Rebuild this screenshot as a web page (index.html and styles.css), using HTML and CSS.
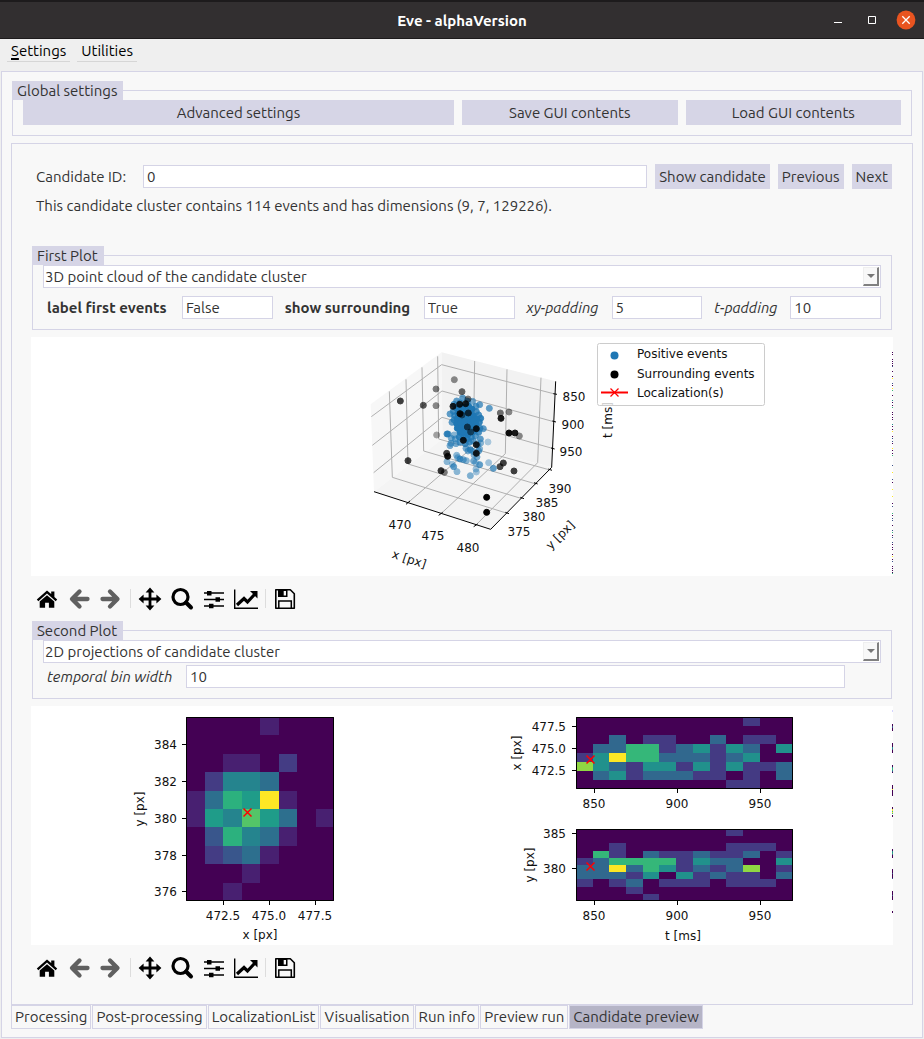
FILE: index.html
```html
<!DOCTYPE html>
<html lang="en">
<head>
<meta charset="utf-8">
<meta name="viewport" content="width=device-width, initial-scale=1">
<title>Eve - alphaVersion</title>
<link rel="stylesheet" href="styles.css">
</head>
<body>
<svg class="sprite" aria-hidden="true">
  <symbol id="i-home" viewBox="0 0 24 24"><path d="M12 3.4 1.8 12.6l1.5 1.7L12 6.6l8.7 7.7 1.5-1.7-2.8-2.6V4.5h-3.2v2.6z"/><path d="M12 8.2 4.7 14.6V20.700h5.4v-5h3.800v5h5.400v-6.100z"/></symbol>
  <symbol id="i-back" viewBox="0 0 24 24"><path d="M12.500 4.500 5 12l7.500 7.500M6 12h14.500" fill="none" stroke="currentColor" stroke-width="4.300" stroke-linecap="round" stroke-linejoin="round"/></symbol>
  <symbol id="i-forward" viewBox="0 0 24 24"><path d="M11 4.500l7.500 7.500-7.500 7.500M17.500 12H3.500" fill="none" stroke="currentColor" stroke-width="4.300" stroke-linecap="round" stroke-linejoin="round"/></symbol>
  <symbol id="i-move" viewBox="0 0 24 24"><path d="M12 .6 16.400 5.400H13.400V10.500H18.400V7.500L23.400 12 18.400 16.500V13.500H13.400V18.600H16.400L12 23.400 7.600 18.600H10.600V13.500H5.600V16.500L.6 12 5.600 7.500V10.500H10.600V5.400H7.600z"/></symbol>
  <symbol id="i-zoom" viewBox="0 0 24 24"><circle cx="10.500" cy="10" r="7.500" fill="none" stroke="currentColor" stroke-width="3.200"/><path d="M16 15.500l5 5" stroke="currentColor" stroke-width="4" stroke-linecap="round"/></symbol>
  <symbol id="i-sliders" viewBox="0 0 24 24"><path d="M2 6h20M2 12.500h20M2 19h20" stroke="currentColor" stroke-width="1.500"/><path d="M5 4h4.500v4.500H5zM13.500 10.300h4.500v4.500h-4.500zM7 16.700h4.500v4.500H7z"/></symbol>
  <symbol id="i-chart" viewBox="0 0 24 24"><path d="M.7 2.500v18.800H24" fill="none" stroke="currentColor" stroke-width="1.400"/><path d="M3 18l7-6.500 3.500 3.500 7-7.500" fill="none" stroke="currentColor" stroke-width="3.200"/><path d="M16 4h7.500v7.500z"/></symbol>
  <symbol id="i-save" viewBox="0 0 24 24"><path d="M2.800 2.800h14.500l4 4v14.500H2.800z" fill="none" stroke="currentColor" stroke-width="1.600" stroke-linejoin="round"/><path d="M5 2.500h9.500v7.500H5zM10.700 4v4.500h2.300V4z" fill-rule="evenodd"/><path d="M5.800 21v-7h12.500v7" fill="none" stroke="currentColor" stroke-width="1.500"/></symbol>
</svg>

<header class="titlebar">
  <h1 class="titlebar-text">Eve - alphaVersion</h1>
  <div class="window-buttons">
    <button type="button" class="win" aria-label="Minimize"><svg viewBox="0 0 20 20"><path d="M6 12.500h8" stroke="#fff"/></svg></button>
    <button type="button" class="win" aria-label="Maximize"><svg viewBox="0 0 20 20"><path d="M6.500 6.500h7v7h-7z" fill="none" stroke="#fff"/></svg></button>
    <button type="button" class="win" aria-label="Close"><svg viewBox="0 0 20 20"><circle cx="10" cy="10" r="9.400" fill="#e95420"/><path d="M6.300 6.300l7.400 7.400M13.700 6.300l-7.400 7.400" stroke="#fff" stroke-width="1.300"/></svg></button>
  </div>
</header>

<nav class="menubar">
  <button type="button" class="menu"><u>S</u>ettings</button>
  <button type="button" class="menu">Utilities</button>
</nav>

<main class="shell">
  <fieldset class="group">
    <legend>Global settings</legend>
    <div class="global-buttons">
      <button type="button" class="btn">Advanced settings</button>
      <button type="button" class="btn">Save GUI contents</button>
      <button type="button" class="btn">Load GUI contents</button>
    </div>
  </fieldset>

  <section class="page" role="tabpanel" aria-label="Candidate preview">
    <div class="candidate">
      <label for="cid">Candidate ID:</label>
      <input id="cid" class="field" type="text" value="0">
      <button type="button" class="btn">Show candidate</button>
      <button type="button" class="btn">Previous</button>
      <button type="button" class="btn">Next</button>
    </div>
    <p class="info">This candidate cluster contains 114 events and has dimensions (9, 7, 129226).</p>

    <fieldset class="group">
      <legend>First Plot</legend>
      <div class="combo">
        <select aria-label="First plot type"><option>3D point cloud of the candidate cluster</option></select>
        <span class="combo-arrow"></span>
      </div>
      <div class="params params-four">
        <label class="strong" for="lfe">label first events</label><input id="lfe" class="field" type="text" value="False">
        <label class="strong" for="ssr">show surrounding</label><input id="ssr" class="field" type="text" value="True">
        <label class="soft" for="xyp">xy-padding</label><input id="xyp" class="field" type="text" value="5">
        <label class="soft" for="tp">t-padding</label><input id="tp" class="field" type="text" value="10">
      </div>
    </fieldset>

    <svg class="plot" viewBox="0 0 862 239" role="img" aria-label="3D point cloud">
      <g transform="translate(319 -2) scale(.33333)" fill="none" stroke-width="3">
        <path d="M62 208 275 52 277 312 72 470z" fill="#f7f7f7"/>
        <path d="M275 52 617 139 605 397 277 312z" fill="#f2f2f2"/>
        <path d="M72 470 277 312 605 397 422 583z" fill="#f4f4f4"/>
        <g stroke="#b0b0b0">
          <path d="M64 245 275 89 614 177M67 331 276 168 611 260M71 413 276 247 607 340"/>
          <path d="M374 78 370 335 174 503M471 103 466 356 272 537M573 128 563 383 376 572"/>
          <path d="M118 169 127 427 472 535M168 133 174 387 516 491M216 97 221 348 558 447M263 64 266 312 600 405"/>
        </g>
        <path stroke="#000" d="M72 470 422 583 605 397 617 139M168 508l12-10M266 541l12-9M371 575l12-8M466 532l11 4M511 487l11 4M552 443l11 4M595 402l11 4M610 176l11 2M607 258l11 3M603 339l11 3"/>
        <g id="cloud"></g>
      </g>
      <g class="ticks mid">
        <text x="369" y="192">470</text><text x="402" y="203">475</text><text x="437" y="215">480</text>
        <text x="488" y="199">375</text><text x="503" y="184">380</text><text x="516" y="170">385</text><text x="529" y="156">390</text>
        <text x="543" y="64">850</text><text x="542" y="92">900</text><text x="540" y="119">950</text>
        <text transform="translate(377 226) rotate(18)">x [px]</text>
        <text transform="translate(532 201) rotate(-45)">y [px]</text>
        <text transform="translate(581 83) rotate(-90)">t [ms]</text>
      </g>
      <rect x="566.500" y="6.500" width="167" height="62" rx="2" fill="#fff" fill-opacity=".8" stroke="#ccc"/>
      <circle cx="583.500" cy="18.500" r="4" fill="#1f77b4"/>
      <circle cx="583.500" cy="37.500" r="4" fill="#000"/>
      <path d="M570 55.500h27" stroke="#f00" stroke-width="2"/>
      <path d="M579.500 51.500l8 8m0-8l-8 8" stroke="#f00" stroke-width="1.200"/>
      <g class="ticks">
        <text x="606" y="21">Positive events</text><text x="606" y="41">Surrounding events</text><text x="606" y="60">Localization(s)</text>
      </g>
      <g id="edge1" shape-rendering="crispEdges"></g>
    </svg>
    <div class="toolbar" data-toolbar></div>

    <fieldset class="group">
      <legend>Second Plot</legend>
      <div class="combo">
        <select aria-label="Second plot type"><option>2D projections of candidate cluster</option></select>
        <span class="combo-arrow"></span>
      </div>
      <div class="params params-one">
        <label class="soft" for="tbw">temporal bin width</label><input id="tbw" class="field" type="text" value="10">
      </div>
    </fieldset>

    <svg class="plot" viewBox="0 0 862 239" role="img" aria-label="2D projections">
      <g id="maps" shape-rendering="crispEdges"></g>
      <g fill="none" stroke="#000">
        <path d="M155.500 11.500h147v183h-147zM545.500 11.500h216v71h-216zM545.500 123.500h216v71h-216z"/>
        <path d="M151 38.500h4M151 75.500h4M151 112.500h4M151 149.500h4M151 185.500h4M192.500 195v4M238.500 195v4M284.500 195v4"/>
        <path d="M541 20.500h4M541 42.500h4M541 64.500h4M563.500 83v4M646.500 83v4M729.500 83v4"/>
        <path d="M541 127.500h4M541 162.500h4M563.500 195v4M646.500 195v4M729.500 195v4"/>
      </g>
      <path d="M212.500 102.500l8 8m0-8l-8 8M555.500 49.500l8 8m0-8l-8 8M555.500 156.500l8 8m0-8l-8 8" stroke="#f00" stroke-width="1.500"/>
      <g class="ticks end">
        <text x="146" y="43">384</text><text x="146" y="80">382</text><text x="146" y="117">380</text><text x="146" y="154">378</text><text x="146" y="190">376</text>
        <text x="535" y="25">477.5</text><text x="535" y="47">475.0</text><text x="535" y="69">472.5</text>
        <text x="535" y="132">385</text><text x="535" y="167">380</text>
      </g>
      <g class="ticks mid">
        <text x="192" y="214">472.5</text><text x="238" y="214">475.0</text><text x="284" y="214">477.5</text><text x="229" y="233">x [px]</text>
        <text x="563" y="102">850</text><text x="646" y="102">900</text><text x="729" y="102">950</text>
        <text x="563" y="214">850</text><text x="646" y="214">900</text><text x="729" y="214">950</text><text x="652" y="234">t [ms]</text>
        <text transform="translate(113 103) rotate(-90)">y [px]</text>
        <text transform="translate(490 47) rotate(-90)">x [px]</text>
        <text transform="translate(503 159) rotate(-90)">y [px]</text>
      </g>
      <g id="edge2" shape-rendering="crispEdges"></g>
    </svg>
    <div class="toolbar" data-toolbar></div>
  </section>

  <div class="tabs" role="tablist">
    <button type="button" class="tab" role="tab" aria-selected="false">Processing</button>
    <button type="button" class="tab" role="tab" aria-selected="false">Post-processing</button>
    <button type="button" class="tab" role="tab" aria-selected="false">LocalizationList</button>
    <button type="button" class="tab" role="tab" aria-selected="false">Visualisation</button>
    <button type="button" class="tab" role="tab" aria-selected="false">Run info</button>
    <button type="button" class="tab" role="tab" aria-selected="false">Preview run</button>
    <button type="button" class="tab" role="tab" aria-selected="true">Candidate preview</button>
  </div>
</main>
<script src="plots.js"></script>
</body>
</html>
```
FILE: styles.css
```css
* { box-sizing: border-box; }

body {
  margin: 0;
  min-height: 100vh;
  display: flex;
  flex-direction: column;
  background: #efefef;
  color: #333;
  font: 15px/19px "Ubuntu", "Noto Sans", "Open Sans", sans-serif;
}

button, input, select { font: inherit; color: inherit; margin: 0; border-radius: 0; }
button { border: 0; background: none; padding: 0; white-space: nowrap; }
.sprite { display: none; }

.titlebar {
  display: grid;
  grid-template-columns: 1fr auto 1fr;
  align-items: center;
  height: 39px;
  padding: 0 8px;
  background: #322f30;
  border-top: 2px solid #1d1b1c;
  border-bottom: 1px solid #1d1b1c;
  color: #fff;
}
.titlebar-text { grid-column: 2; margin: 0; font-size: 15px; line-height: 19px; }
.window-buttons { display: flex; justify-content: flex-end; gap: 14px; }
.win { width: 20px; height: 20px; }
.win svg { display: block; }

.menubar { display: flex; gap: 7px; padding: 2px 7px 9px; color: #000; }
.menu { padding: 0 4px; line-height: 20px; border-bottom: 1px solid #d6d6d6; }
.menu u { text-underline-offset: 2px; text-decoration-thickness: 2px; }

.shell {
  flex: 1;
  display: flex;
  flex-direction: column;
  margin: 0 1px 1px;
  padding: 9px 9px 8px;
  border: 1px solid #d5d4e6;
  background: #f8f8f8;
}

.group { min-width: 0; margin: 0 1px; padding: 0 10px 10px; border: 1px solid #d5d4e6; }
.group legend { margin-left: -11px; padding: 0 6px 0 5px; background: #d6d5e6; line-height: 19px; }

.btn { height: 25px; padding: 0 4px; background: #d6d5e6; }
.global-buttons { display: grid; grid-template-columns: 2fr 1fr 1fr; gap: 8px; }

.page { flex: 1; margin-top: 7px; padding: 20px 19px 0; border: 1px solid #d5d4e6; }
.candidate { display: flex; align-items: center; gap: 8px; padding: 0 1px 0 5px; }
.candidate label { width: 99px; }
.candidate .field { flex: 1; }
.info { margin: 7px 5px 31px; }

.field {
  min-width: 0;
  width: 100%;
  height: 23px;
  padding: 0 3px;
  border: 1px solid #d5d4e6;
  background: #fff;
}

.combo { position: relative; }
.combo select {
  display: block;
  width: 100%;
  height: 23px;
  padding: 0 1px;
  border: 1px solid #d5d4e6;
  background: #fff;
  appearance: none;
}
.combo-arrow {
  position: absolute;
  top: 2px;
  right: 2px;
  bottom: 2px;
  width: 16px;
  display: grid;
  place-items: center;
  background: #f8f8f8;
  border: 1px solid #efefef;
  border-right: 2px solid #808080;
  border-bottom: 2px solid #808080;
  pointer-events: none;
}
.combo-arrow::before {
  content: "";
  border: 4px solid transparent;
  border-top-color: #777;
  border-bottom: 0;
}

.params { display: grid; align-items: center; column-gap: 12px; white-space: nowrap; }
.params-four { grid-template-columns: 123px 1fr 127px 1fr 73px 1fr 64px 1fr; padding: 8px 0 0 4px; }
.params-one { grid-template-columns: 127px 1fr; padding: 2px 36px 0 4px; }
.strong { font-weight: bold; }
.soft { font-style: italic; }

.plot { display: block; width: 100%; height: auto; margin-top: 7px; background: #fff; }
.ticks { font: 12px "DejaVu Sans", sans-serif; fill: #111; }
.mid { text-anchor: middle; }
.end { text-anchor: end; }

.toolbar { display: flex; align-items: center; height: 45px; }
.tool { width: 32px; height: 32px; display: grid; place-items: center; color: #000; }
.tool:disabled { color: #606060; }
.tool svg { width: 24px; height: 24px; fill: currentColor; }
.rule { width: 7px; height: 19px; background: linear-gradient(#ddd, #ddd) center / 1px 100% no-repeat; }

.tabs { display: flex; gap: 1px; }
.tab { height: 24px; padding: 0 3px 2px; border: 1px solid #d5d4e6; }
.tab[aria-selected="true"] { background: #b5b4c6; }
```
FILE: plots.js
```js
const NS = "http://www.w3.org/2000/svg";
function add(parent, tag, attrs) {
  const el = document.createElementNS(NS, tag);
  for (const k in attrs) el.setAttribute(k, attrs[k]);
  parent.appendChild(el);
}

/* Event counts per bin, top row first. */
const projXY = ["00001000","00000000","00110200","02554000","1476b100","16586401","03754100","02341000","00010000","00100000"];
const projTX = ["0000000000100","0000000000000","0020110020110","0224412313203","1364422212300","5321331313112","0231222110102","0000000001100"];
const projTY = ["0000000001000","0000000000000","0010000001110","0410211211201","1244441322003","2262431212501","2221303121102","1012011101110","0001000000000","0000100000000"];
const fine = ["#440154","#482071","#443c84","#39568c","#2d6f8e","#25848e","#1f9c89","#2cb17e","#54c568","#84d44b","#c0df25","#fde725"];
const coarse = ["#440154","#443a83","#31688e","#21918c","#35b779","#90d743","#fde725"];

function heatmap(rows, palette, x, y, w, h) {
  const g = document.getElementById("maps");
  const cols = rows[0].length;
  rows.forEach((row, r) => {
    const y0 = Math.round(y + r * h / rows.length), y1 = Math.round(y + (r + 1) * h / rows.length);
    [...row].forEach((v, c) => {
      const x0 = Math.round(x + c * w / cols), x1 = Math.round(x + (c + 1) * w / cols);
      add(g, "rect", { x: x0, y: y0, width: x1 - x0, height: y1 - y0, fill: palette[parseInt(v, 16)] });
    });
  });
}
heatmap(projXY, fine, 155, 11, 148, 184);
heatmap(projTX, coarse, 545, 11, 217, 72);
heatmap(projTY, coarse, 545, 123, 217, 72);

const positive = [
  [338,189,.7],[320,198,.7],[352,199,.8],[368,199,.6],[389,209,.7],[418,220,.7],[312,208,.7],[330,204,.8],[378,214,.7],
  [300,237,.7],[310,229,.8],[320,220,1],[332,218,1],[344,216,1],[356,214,1],[366,222,1],[379,230,.8],[386,240,.8],[392,250,.9],
  [314,242,.8],[306,262,.7],[312,254,.8],[324,236,1],[336,232,1],[348,230,1],[360,236,1],[370,242,1],[380,252,1],[388,262,.9],
  [322,252,1],[334,248,1],[346,246,1],[358,252,1],[368,258,1],[378,268,1],[390,280,.8],[400,281,.7],
  [320,266,1],[332,264,1],[344,262,1],[356,268,1],[366,274,1],[376,284,1],[386,292,.8],
  [322,280,1],[334,278,1],[346,280,1],[358,286,1],[368,292,.9],[330,292,1],[342,294,1],[354,298,1],
  [291,297,.8],[294,297,.7],[312,300,.5],[304,310,.6],[316,312,.6],[328,306,.9],[340,308,.9],[352,312,.9],[364,306,.8],[376,302,.7],
  [391,312,.7],[414,321,.35],[300,332,.6],[303,325,.6],[318,326,.6],[330,322,.7],[346,326,.8],[358,322,.8],[370,318,.7],[384,330,.6],[392,324,.5],
  [348,340,.6],[354,348,.6],[361,344,.8],[370,350,.6],[386,348,.6],[389,342,.5],[372,360,.5],[381,366,.6],
  [320,361,.5],[330,372,.7],[340,374,.6],[349,377,.5],[323,368,.5],[291,380,.5],[371,378,.6],[377,383,.4],[389,389,.7],
  [311,395,.7],[307,388,.4],[321,410,.5],[361,422,.55],[379,411,.4],[378,402,.4],[416,383,.4],[430,400,.7]
];
const surrounding = [
  [313,134,.45],[258,162,.5],[336,170,.6],[151,198,.75],[220,211,.65],[258,212,.45],[354,192,.5],[260,300,.35],[174,377,.75],
  [273,407,.8],[283,412,.5],[290,355,.75],[293,364,.9],[451,234,.55],[477,231,.45],[453,250,.9],[477,294,.95],[495,294,.9],
  [508,303,.45],[460,384,.75],[450,395,.7],[492,408,.75],[410,487,1],[410,532,1],[309,214,.85],[329,208,.85],[347,206,.85],
  [330,236,.9],[336,240,.5],[355,234,.7],[352,276,.6],[379,281,.85],[362,291,.5],[340,316,.85],[379,329,.85],[379,355,.85]
];
const cloud = document.getElementById("cloud");
for (const [list, color] of [[positive, "#1f77b4"], [surrounding, "#000"]])
  for (const [cx, cy, a] of list)
    add(cloud, "circle", { cx, cy, r: 9, fill: color, stroke: color, opacity: a });

/* One-pixel columns at the right edge of each canvas. */
const hues = { p: "#440154", b: "#3b528b", t: "#21918c", g: "#35b779", y: "#fde725", l: "#d5d4ff" };
function edge(id, spec) {
  const g = document.getElementById(id);
  for (const s of spec.split(" ")) {
    const [, hue, y, h] = s.match(/([a-z])(\d+)-?(\d*)/);
    add(g, "rect", { x: 861, y, width: 1, height: h || 1, fill: hues[hue] });
  }
}
edge("edge1", "p15 p17 p22 p24 p26 p28 b29 p34 p39 y41 b46 p48 y51 g53 p58 t63 p65 p68 g70 p75 p77 p80 p82 t87 p89 p92 y94 p99 b101 b104 p106 y111 p113 p116 g118 b128 y135 b142 p145 y152 y159 p166 b169 g176 p178 b181 b183 p188 b193 g195 p198 b200 b205 p207 p210 p212 p217 y219 p222 b224 p229 p231 p233 p235 g236");
edge("edge2", "l4-2 p18-2 b20-2 p22-3 p37-4 t41-2 b43-1 p44-3 p59-2 t61-1 g62-2 t64-1 b65-1 p66-1 p79-4 y83-1 p84-6 p101-2 y103-2 g105-1 y106-1 g107-1 p109-2 p143-2 t145-2 g147-1 b148-1 p149-3 p163-4 b167-1 p168-4 b172-1 p185-4 b189-1 p190-4 p205-2");

const tools = [["home","Home"],["back","Back",1],["forward","Forward",1],null,["move","Pan"],["zoom","Zoom"],["sliders","Configure subplots"],["chart","Edit axes"],null,["save","Save figure"]];
document.querySelectorAll("[data-toolbar]").forEach(bar => {
  bar.innerHTML = tools.map(t => t
    ? `<button type="button" class="tool" aria-label="${t[1]}"${t[2] ? " disabled" : ""}><svg><use href="#i-${t[0]}"/></svg></button>`
    : `<span class="rule"></span>`).join("");
});
```
